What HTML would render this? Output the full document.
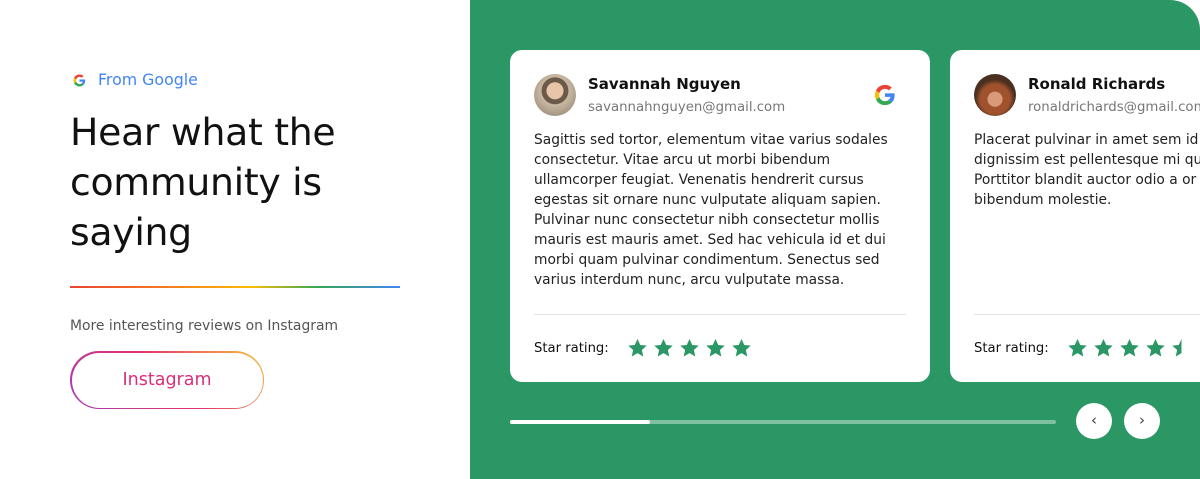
<!DOCTYPE html>
<html><head><meta charset="utf-8"><style>
*{margin:0;padding:0;box-sizing:border-box}
body{width:1200px;height:479px;background:#fff;font-family:"DejaVu Sans","Liberation Sans",sans-serif;position:relative;overflow:hidden}
.abs{position:absolute;white-space:nowrap}
.green{position:absolute;left:470px;top:0;width:730px;height:479px;background:#2a9764;border-top-right-radius:30px}
.card{position:absolute;top:50px;width:420px;height:332px;background:#fff;border-radius:12px;overflow:hidden}
.av{position:absolute;left:24px;top:24px;width:42px;height:42px;border-radius:50%}
.name{position:absolute;left:78px;top:25px;font-size:15px;font-weight:bold;color:#111}
.mail{position:absolute;left:78px;top:50px;font-size:13.3px;color:#777}
.body{position:absolute;left:24px;top:80px;font-size:13.8px;line-height:20px;color:#222;white-space:nowrap}
.hr{position:absolute;left:24px;right:24px;top:264px;height:1px;background:#e3e3e3}
.sr{position:absolute;left:24px;top:291px;font-size:13.2px;color:#111}
.stars{position:absolute;left:118px;top:289px;display:flex;gap:7px}
.circ{position:absolute;top:403px;width:36px;height:36px;border-radius:50%;background:#fff;color:#444;font-size:15px;text-align:center;line-height:34px}
</style></head><body>
<svg class="abs" style="left:73px;top:74px" width="13" height="13" viewBox="0 0 48 48"><path fill="#4285F4" d="M45 24.5c0-1.6-.1-2.8-.4-4.1H24v7.8h11.9c-.5 2.9-2.2 5.4-4.7 7l7.2 5.6C42.6 36.9 45 31.2 45 24.5z"/><path fill="#34A853" d="M24 46c6 0 11-2 14.6-5.3l-7.2-5.6c-2 1.4-4.6 2.2-7.4 2.2-5.7 0-10.5-3.8-12.2-9l-7.4 5.7C7.9 41.2 15.4 46 24 46z"/><path fill="#FBBC05" d="M11.8 28.3c-.4-1.3-.7-2.8-.7-4.3s.3-3 .7-4.3l-7.4-5.7C2.9 17 2 20.4 2 24s.9 7 2.4 10z"/><path fill="#EA4335" d="M24 10.7c3.2 0 6.1 1.1 8.4 3.3l6.3-6.3C34.9 4.2 30 2 24 2 15.4 2 7.9 6.8 4.4 14l7.4 5.7c1.7-5.2 6.5-9 12.2-9z"/></svg>
<div class="abs" style="left:98px;top:70px;font-size:15.8px;color:#4285f4">From Google</div>
<div class="abs" style="left:70px;top:107px;font-size:37.8px;line-height:50px;color:#111;letter-spacing:-0.3px">Hear what the<br>community is<br>saying</div>
<div class="abs" style="left:70px;top:286px;width:330px;height:2px;background:linear-gradient(90deg,#ea4335,#f57c20 30%,#fbbc05 55%,#34a853 75%,#4285f4)"></div>
<div class="abs" style="left:70px;top:318px;font-size:13.9px;color:#555">More interesting reviews on Instagram</div>
<div class="abs" style="left:70px;top:351px;width:194px;height:58px;border-radius:29px;padding:1.5px;background:linear-gradient(45deg,#a43cb8,#e5306d 50%,#f8c33a)"><div style="width:100%;height:100%;border-radius:28px;background:#fff;text-align:center;line-height:55px;font-size:17.5px;color:#d8307a">Instagram</div></div>

<div class="green"></div>
<div class="card" style="left:510px">
<div class="av" style="background:radial-gradient(circle at 50% 40%,#e8c4a8 0 25%,#6b5a4a 27% 40%,#c9b9a4 42%,#8a7c6a)"></div>
<div class="name">Savannah Nguyen</div>
<div class="mail">savannahnguyen@gmail.com</div>
<svg style="position:absolute;left:364px;top:34px" width="22" height="22" viewBox="0 0 48 48"><path fill="#4285F4" d="M45 24.5c0-1.6-.1-2.8-.4-4.1H24v7.8h11.9c-.5 2.9-2.2 5.4-4.7 7l7.2 5.6C42.6 36.9 45 31.2 45 24.5z"/><path fill="#34A853" d="M24 46c6 0 11-2 14.6-5.3l-7.2-5.6c-2 1.4-4.6 2.2-7.4 2.2-5.7 0-10.5-3.8-12.2-9l-7.4 5.7C7.9 41.2 15.4 46 24 46z"/><path fill="#FBBC05" d="M11.8 28.3c-.4-1.3-.7-2.8-.7-4.3s.3-3 .7-4.3l-7.4-5.7C2.9 17 2 20.4 2 24s.9 7 2.4 10z"/><path fill="#EA4335" d="M24 10.7c3.2 0 6.1 1.1 8.4 3.3l6.3-6.3C34.9 4.2 30 2 24 2 15.4 2 7.9 6.8 4.4 14l7.4 5.7c1.7-5.2 6.5-9 12.2-9z"/></svg>
<div class="body">Sagittis sed tortor, elementum vitae varius sodales<br>consectetur. Vitae arcu ut morbi bibendum<br>ullamcorper feugiat. Venenatis hendrerit cursus<br>egestas sit ornare nunc vulputate aliquam sapien.<br>Pulvinar nunc consectetur nibh consectetur mollis<br>mauris est mauris amet. Sed hac vehicula id et dui<br>morbi quam pulvinar condimentum. Senectus sed<br>varius interdum nunc, arcu vulputate massa.</div>
<div class="hr"></div>
<div class="sr">Star rating:</div>
<div class="stars">
<svg width="19" height="18" viewBox="0 0 24 23"><path fill="#2a9764" d="M12 0l3.5 7.6 8.3.9-6.2 5.6 1.8 8.2L12 18.1 4.6 22.3l1.8-8.2L.2 8.5l8.3-.9z"/></svg>
<svg width="19" height="18" viewBox="0 0 24 23"><path fill="#2a9764" d="M12 0l3.5 7.6 8.3.9-6.2 5.6 1.8 8.2L12 18.1 4.6 22.3l1.8-8.2L.2 8.5l8.3-.9z"/></svg>
<svg width="19" height="18" viewBox="0 0 24 23"><path fill="#2a9764" d="M12 0l3.5 7.6 8.3.9-6.2 5.6 1.8 8.2L12 18.1 4.6 22.3l1.8-8.2L.2 8.5l8.3-.9z"/></svg>
<svg width="19" height="18" viewBox="0 0 24 23"><path fill="#2a9764" d="M12 0l3.5 7.6 8.3.9-6.2 5.6 1.8 8.2L12 18.1 4.6 22.3l1.8-8.2L.2 8.5l8.3-.9z"/></svg>
<svg width="19" height="18" viewBox="0 0 24 23"><path fill="#2a9764" d="M12 0l3.5 7.6 8.3.9-6.2 5.6 1.8 8.2L12 18.1 4.6 22.3l1.8-8.2L.2 8.5l8.3-.9z"/></svg>
</div>
</div>
<div class="card" style="left:950px">
<div class="av" style="background:radial-gradient(circle at 50% 60%,#d99a7a 0 22%,#a0522d 24% 45%,#4a3020 60%)"></div>
<div class="name">Ronald Richards</div>
<div class="mail">ronaldrichards@gmail.com</div>
<div class="body">Placerat pulvinar in amet sem id<br>dignissim est pellentesque mi qu<br>Porttitor blandit auctor odio a or<br>bibendum molestie.</div>
<div class="hr" style="right:0"></div>
<div class="sr">Star rating:</div>
<div class="stars">
<svg width="19" height="18" viewBox="0 0 24 23"><path fill="#2a9764" d="M12 0l3.5 7.6 8.3.9-6.2 5.6 1.8 8.2L12 18.1 4.6 22.3l1.8-8.2L.2 8.5l8.3-.9z"/></svg>
<svg width="19" height="18" viewBox="0 0 24 23"><path fill="#2a9764" d="M12 0l3.5 7.6 8.3.9-6.2 5.6 1.8 8.2L12 18.1 4.6 22.3l1.8-8.2L.2 8.5l8.3-.9z"/></svg>
<svg width="19" height="18" viewBox="0 0 24 23"><path fill="#2a9764" d="M12 0l3.5 7.6 8.3.9-6.2 5.6 1.8 8.2L12 18.1 4.6 22.3l1.8-8.2L.2 8.5l8.3-.9z"/></svg>
<svg width="19" height="18" viewBox="0 0 24 23"><path fill="#2a9764" d="M12 0l3.5 7.6 8.3.9-6.2 5.6 1.8 8.2L12 18.1 4.6 22.3l1.8-8.2L.2 8.5l8.3-.9z"/></svg>
<svg width="19" height="18" viewBox="0 0 24 23"><path fill="#2a9764" d="M12 0v18.1L4.6 22.3l1.8-8.2L.2 8.5l8.3-.9z"/></svg>
</div>
</div>
<div class="abs" style="left:510px;top:420px;width:546px;height:4px;border-radius:2px;background:rgba(255,255,255,0.4)"></div>
<div class="abs" style="left:510px;top:420px;width:140px;height:4px;border-radius:2px;background:#fff"></div>
<div class="circ" style="left:1076px">&#8249;</div>
<div class="circ" style="left:1124px">&#8250;</div>
</body></html>
